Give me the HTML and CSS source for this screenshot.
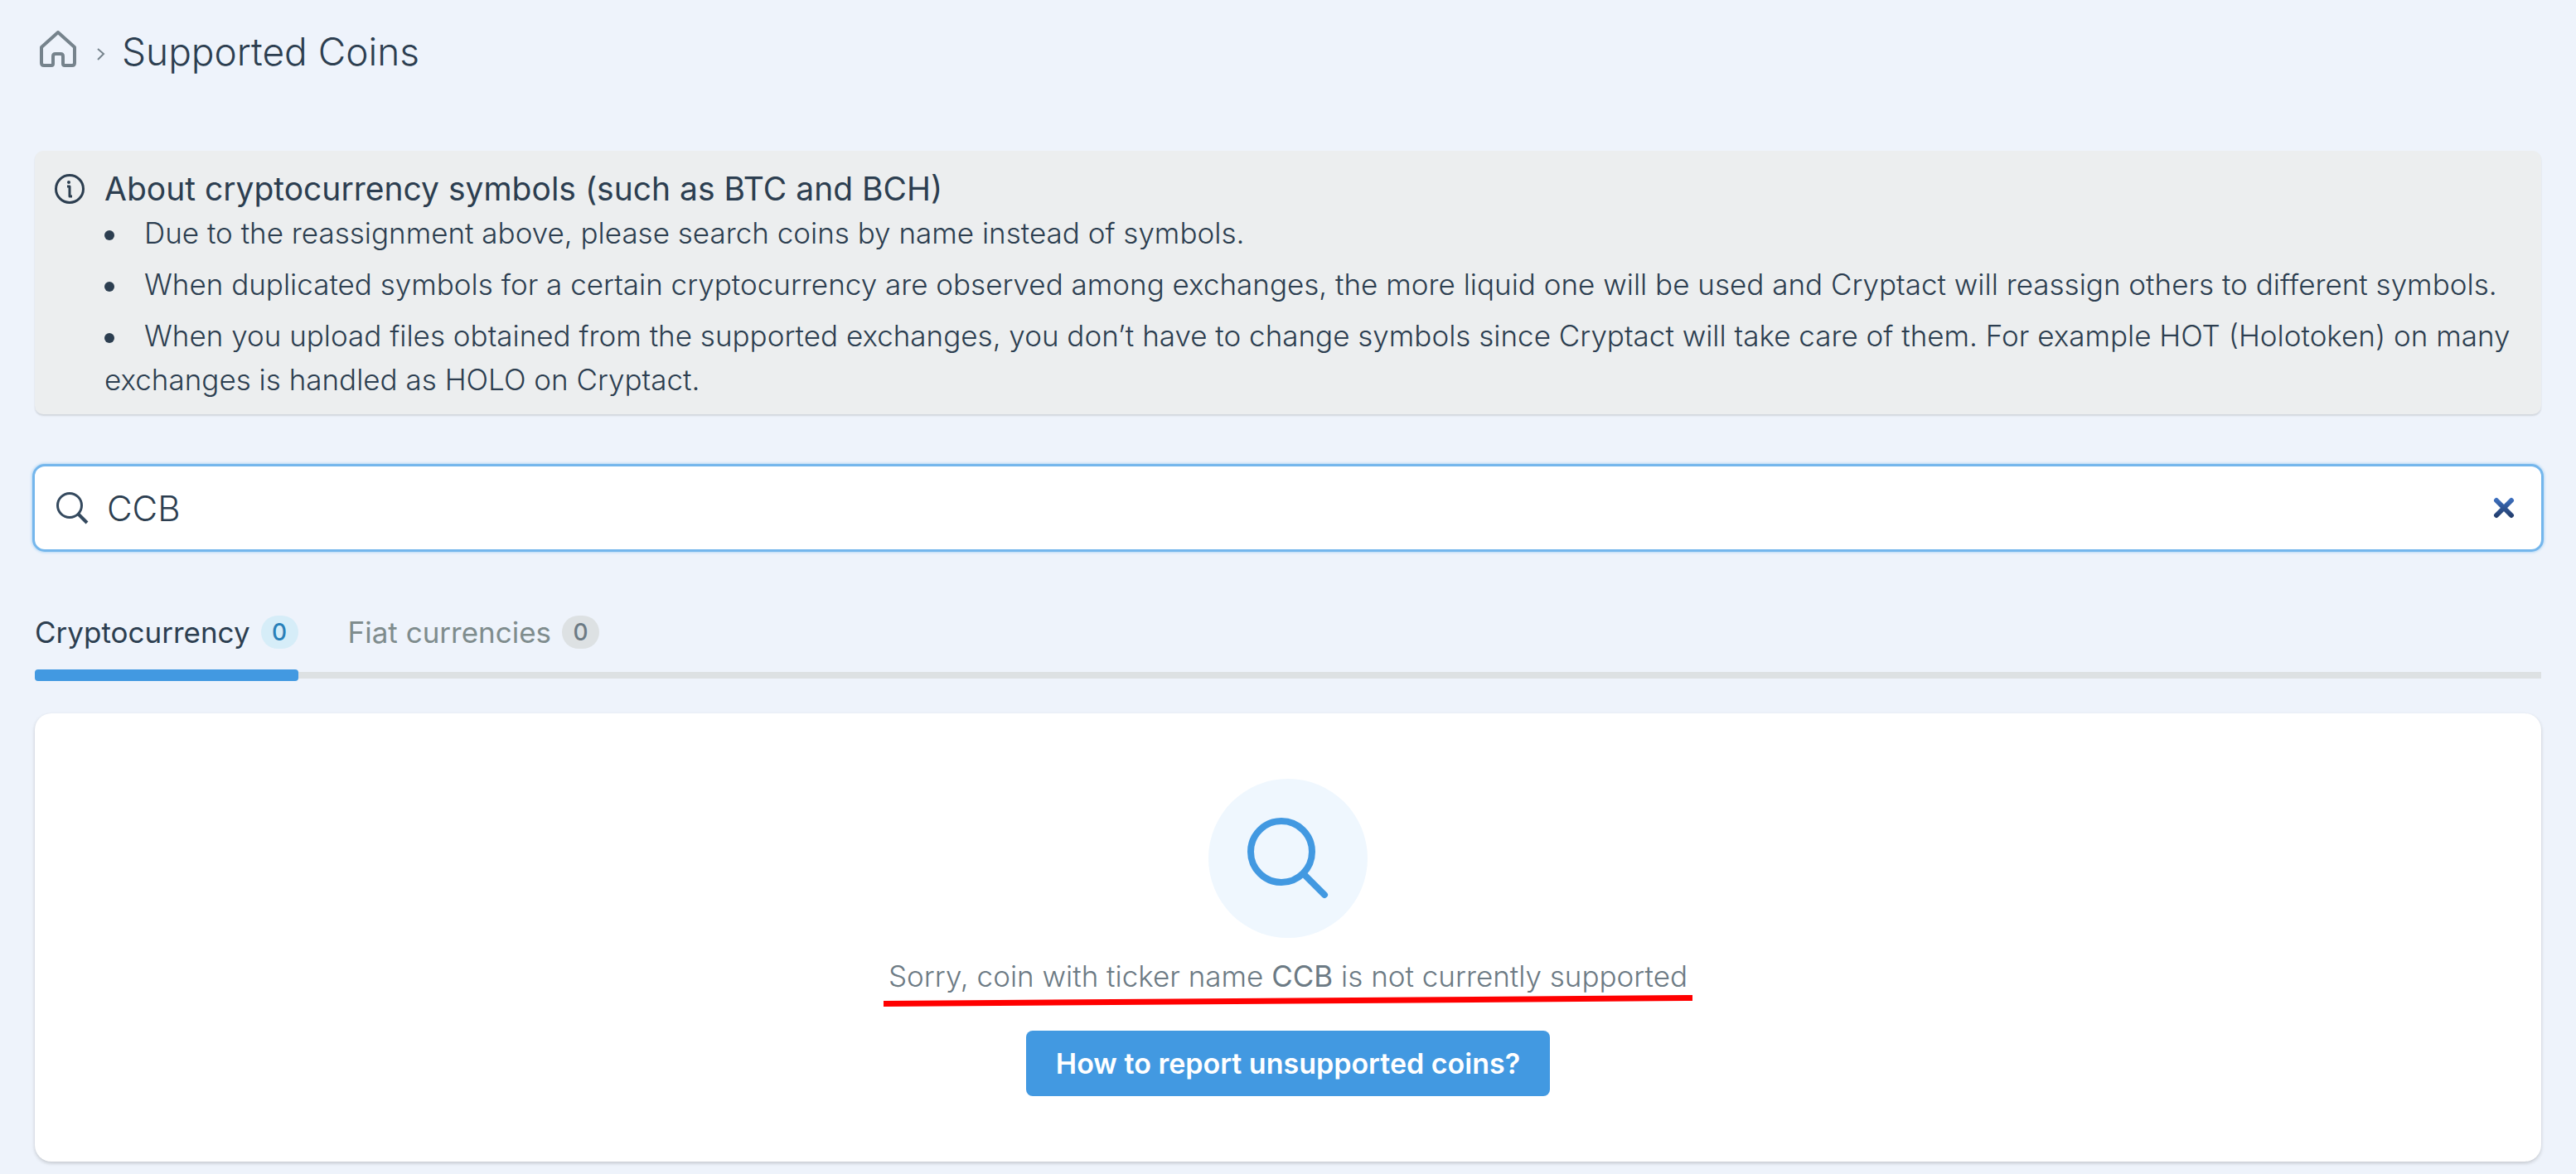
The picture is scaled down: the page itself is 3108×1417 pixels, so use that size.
FILE: index.html
```html
<!DOCTYPE html>
<html lang="en">
<head>
    <meta charset="UTF-8">
    <meta name="viewport" content="width=device-width, initial-scale=1.0">
    <title>Supported Coins</title>
    <link rel="stylesheet" href="styles.css">
</head>
<body>
    <!-- Breadcrumb -->
    <header class="breadcrumb">
        <a href="#" class="home-link" aria-label="Home">
            <svg width="46" height="50" viewBox="0 0 46 50" fill="none" stroke="#76838c" stroke-width="4" stroke-linejoin="round">
                <path d="M4 20 L24 2 L44 20 V39 Q44 42 41 42 H32 Q30 42 30 40 V31 Q30 28 27 28 H21 Q18 28 18 31 V40 Q18 42 16 42 H7 Q4 42 4 39 Z"/>
            </svg>
        </a>
        <svg class="chevron" width="12" height="18" viewBox="0 0 12 18" fill="none" stroke="#76838c" stroke-width="2">
            <path d="M2 3 L9 9 L2 16"/>
        </svg>
        <h1>Supported Coins</h1>
    </header>

    <main>
        <!-- Notice -->
        <section class="notice">
            <svg class="notice-icon" width="38" height="38" viewBox="0 0 38 38" fill="none" stroke="#2c3e50" stroke-width="3">
                <circle cx="19" cy="19" r="16.5"/>
                <path d="M16 16 H19 V28 H22" stroke-width="3" stroke-linejoin="round"/>
                <circle cx="18" cy="11" r="2" fill="#2c3e50" stroke="none"/>
            </svg>
            <div>
                <h2>About cryptocurrency symbols (such as BTC and BCH)</h2>
                <ul>
                    <li>Due to the reassignment above, please search coins by name instead of symbols.</li>
                    <li>When duplicated symbols for a certain cryptocurrency are observed among exchanges, the more liquid one will be used and Cryptact will reassign others to different symbols.</li>
                    <li>When you upload files obtained from the supported exchanges, you don’t have to change symbols since Cryptact will take care of them. For example HOT (Holotoken) on many exchanges is handled as HOLO on Cryptact.</li>
                </ul>
            </div>
        </section>

        <!-- Search -->
        <form class="search">
            <label for="coin-search" aria-label="Search coins">
                <svg width="40" height="40" viewBox="0 0 40 40" fill="none" stroke="#34495e" stroke-width="3">
                    <circle cx="17" cy="17" r="14.5"/>
                    <path d="M27 27 L38 38" stroke-width="4"/>
                </svg>
            </label>
            <input type="text" id="coin-search" value="CCB">
            <button type="button" class="clear" aria-label="Clear search">
                <svg width="26" height="26" viewBox="0 0 26 26" fill="none" stroke="url(#clear-fill)" stroke-width="6" stroke-linecap="round">
                    <defs>
                        <linearGradient id="clear-fill" gradientUnits="userSpaceOnUse" x1="0" y1="0" x2="0" y2="26">
                            <stop offset="0" stop-color="#3f74c6"/>
                            <stop offset="1" stop-color="#203864"/>
                        </linearGradient>
                    </defs>
                    <path d="M4 4 L22 22 M22 4 L4 22"/>
                </svg>
            </button>
        </form>

        <!-- Tabs -->
        <nav class="tabs">
            <button type="button" class="tab active">Cryptocurrency <span class="count">0</span></button>
            <button type="button" class="tab">Fiat currencies <span class="count">0</span></button>
        </nav>

        <!-- Empty result -->
        <section class="card">
            <div class="circle">
                <svg width="98" height="98" viewBox="0 0 98 98" fill="none" stroke="#4299e1" stroke-width="8" stroke-linecap="round">
                    <circle cx="41" cy="41" r="37"/>
                    <path d="M69 69 L93 93"/>
                </svg>
            </div>
            <p class="message">
                Sorry, coin with ticker name <b>CCB</b> is not currently supported
                <svg class="underline" viewBox="0 0 977 14" preserveAspectRatio="none">
                    <polygon points="0,7 977,0 977,7 0,14" fill="#ff0000"/>
                </svg>
            </p>
            <button type="button" class="report">How to report unsupported coins?</button>
        </section>
    </main>
</body>
</html>
```
FILE: styles.css
```css
* {
    box-sizing: border-box;
}
body {
    font-family: Inter, 'Open Sans', sans-serif;
    font-size: 35px;
    font-weight: 300;
    margin: 0;
    padding: 32px 42px 16px;
    background: #eef3fb;
    color: #2c3e50;
}
svg {
    display: block;
}
h1, h2, p, ul {
    margin: 0;
    padding: 0;
}
button, input {
    font-family: inherit;
    border: none;
    background: none;
    padding: 0;
}
button {
    cursor: pointer;
}

.breadcrumb {
    display: flex;
    align-items: center;
    padding-left: 4px;
    margin-bottom: 90px;
}
.chevron {
    margin: 6px 19px 0 24px;
}
h1 {
    font-size: 46px;
    line-height: 60px;
    font-weight: 300;
}

.notice {
    display: flex;
    gap: 23px;
    padding: 18px 36px 15px 23px;
    background: #eceeef;
    border-radius: 10px;
    box-shadow: 0 2px 2px rgba(0,0,0,0.12);
}
.notice-icon {
    flex: none;
    margin-top: 9px;
}
h2 {
    font-size: 39px;
    line-height: 55px;
    font-weight: 400;
}
ul {
    display: grid;
    gap: 9px;
    list-style: none;
}
li {
    line-height: 53px;
}
li::before {
    content: "";
    display: inline-block;
    width: 12px;
    height: 12px;
    margin-right: 36px;
    border-radius: 50%;
    background: #2c3e50;
    vertical-align: 4px;
}

.search {
    display: flex;
    align-items: center;
    height: 100px;
    margin-top: 63px;
    padding: 0 32px 0 25px;
    background: #fff;
    border-radius: 12px;
    box-shadow: 0 0 0 3px #74b6ec, 0 0 3px 4px #b5d8f5;
}
.search input {
    flex: 1;
    margin-left: 22px;
    font-size: 42px;
    font-weight: 300;
    color: #2c3e50;
    outline: none;
}

.tabs {
    position: relative;
    display: flex;
    gap: 60px;
    margin-top: 80px;
}
.tabs::after {
    content: "";
    position: absolute;
    left: 0;
    right: 0;
    bottom: 3px;
    height: 8px;
    background: #dde1e3;
}
.tab {
    position: relative;
    display: flex;
    gap: 13px;
    padding-bottom: 39px;
    font-size: 35px;
    line-height: 40px;
    font-weight: 400;
    color: #7f8c8d;
}
.tab.active {
    color: #2c3e50;
    z-index: 1;
}
.tab.active::after {
    content: "";
    position: absolute;
    left: 0;
    right: 0;
    bottom: 0;
    height: 14px;
    border-radius: 4px;
    background: #4299e1;
}
.count {
    width: 45px;
    border-radius: 20px;
    font-size: 28px;
    font-weight: 500;
    background: #dde1e3;
    color: #6c7a84;
}
.active .count {
    background: #d6edf8;
    color: #2980b9;
}

.card {
    display: flex;
    flex-direction: column;
    align-items: center;
    margin-top: 39px;
    padding: 79px 0;
    background: #fff;
    border-radius: 20px;
    box-shadow: 0 2px 4px rgba(0,0,0,0.18);
}
.circle {
    display: flex;
    align-items: center;
    justify-content: center;
    width: 192px;
    height: 192px;
    border-radius: 50%;
    background: #eff7fe;
}
.message {
    position: relative;
    margin-top: 21px;
    line-height: 50px;
    color: #6c7a84;
}
.message b {
    font-weight: 400;
}
/* hand-drawn marker line under the message */
.underline {
    position: absolute;
    left: -6px;
    top: 48px;
    width: calc(100% + 12px);
    height: 14px;
}
.report {
    margin-top: 41px;
    padding: 0 36px;
    font-size: 34px;
    line-height: 79px;
    font-weight: 600;
    color: #fff;
    background: #4299e1;
    border-radius: 8px;
}
```
